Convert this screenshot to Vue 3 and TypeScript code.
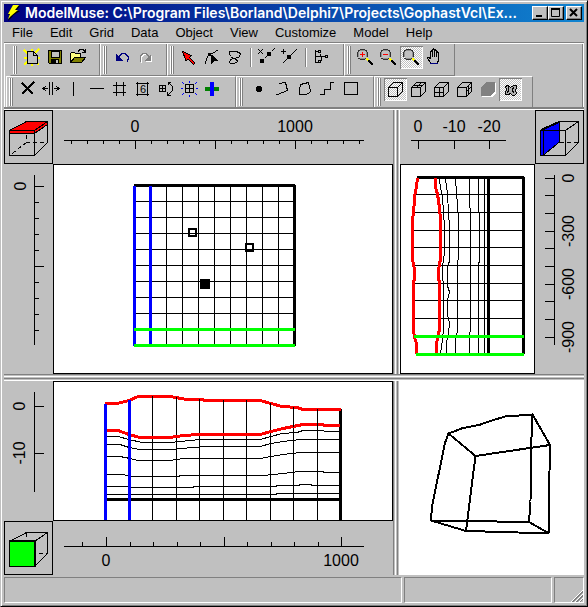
<script setup lang="ts">
interface Shape { d: string; f?: string; s?: string; w?: number }
interface Tool { id: string; label: string; shapes: Shape[]; pressed?: boolean; glyph?: string; gapBefore?: boolean }
interface Tick { at: number; label?: string; major?: boolean }

const title = 'ModelMuse: C:\\Program Files\\Borland\\Delphi7\\Projects\\GophastVcl\\Ex...'
const menus = ['File', 'Edit', 'Grid', 'Data', 'Object', 'View', 'Customize', 'Model', 'Help']

const K = '#000'
const line = (d: string, s = K, w = 1): Shape => ({ d, s, w })
const fill = (d: string, f = K, s?: string): Shape => ({ d, f, s })

const lens = (mark?: string): Shape[] => [
  line('M6 4.5h5M4.5 6v5M12.5 6v5M6 12.5h5', '#909090'),
  line('M6 3.5h5M11 4.5h2M4 4.5h2M3.5 6v5M13.5 6v5M4 12.5h2M11 12.5h2M6 13.5h5M4.5 5v1M12.5 5v1', '#303030'),
  ...(mark ? [line(mark, '#f00')] : []),
  line('M12.5 12.5l3 3', '#ff0', 2),
  line('M14.5 14.5l4.5 4.5', K, 2),
]
const cube = 'M4.5 9.5h9v9h-9zM4.5 9.5l5-5h9l-5 5M18.5 4.5v9l-5 5'

const fileTools: Tool[] = [
  { id: 'new', label: 'New', shapes: [
    line('M4 4l4 4M11.5 2.5v3M19 3l-4 4M4 11.5h4M20 11.5h-4M4 19l4-4M19 19l-4-4M11.5 17v3', '#ff0', 2),
    fill('M7.5 5.5h6l4 4v8h-10z', '#c0c0c0', K), line('M13.5 5.5v4h4'),
  ] },
  { id: 'save', label: 'Save', shapes: [
    fill('M5.5 4.5h13v13h-12l-1-1z', '#808000', K), fill('M8 5h8v6H8z', '#c0c0c0', K), fill('M8 13h8v5H8z', K), fill('M13 14h2v3h-2z', '#c0c0c0'),
  ] },
  { id: 'open', label: 'Open', shapes: [
    fill('M4.5 16.5v-9l1-1h3l1 1h5v4h-6z', '#ffff80', K), fill('M4.5 16.5l4-5h11l-4 5z', '#808000', K), line('M12 5.5l2-2h3l2 2M19.5 3v4M16 6.5h4'),
  ] },
]
const historyTools: Tool[] = [
  { id: 'undo', label: 'Undo', shapes: [fill('M6 8v7h7z', '#000080'), line('M9 10.5l3-3h3l3 3v3l-1 2', '#000080')] },
  { id: 'redo', label: 'Redo', shapes: [
    fill('M19 9v7h-7z', '#fff'), line('M17 11.5l-3-3h-3l-3 3v3l1 2', '#fff'),
    fill('M18 8v7h-7z', '#808080'), line('M16 10.5l-3-3h-3l-3 3v3l1 2', '#808080'),
  ] },
]
const objectTools: Tool[] = [
  { id: 'select', label: 'Select objects', shapes: [fill('M5.5 5.5l9 4-2 2 5.5 5.5-1.5 1.5-5.5-5.5-2 2z', '#f00', K)] },
  { id: 'vertices', label: 'Select vertices', shapes: [
    line('M5.5 18v-3M6.5 15v-3M7.5 12v-2M11 7.5h2M13 6.5h2M15 5.5h1M16 4.5h2'), fill('M8 7h3v3H8z'), fill('M11 9h1l6 6h-4l-3 3z'),
  ] },
  { id: 'lasso', label: 'Lasso', shapes: [line('M8.5 10.5l-2-2v-3h6l4 1 1 2-2 3-5 1-3 1-1 3 1 1h4l3-2-1-2-5-2')] },
  { id: 'delete-segment', label: 'Delete segment', gapBefore: true, shapes: [
    line('M3 3l5 5M8 3l-5 5M4.5 17.5l2-2M9.5 12.5l2-2M16.5 5.5l3-3'), fill('M5 13h4v4H5z'), fill('M12 6h4v4h-4z'),
  ] },
  { id: 'insert-node', label: 'Insert node', shapes: [line('M3 5.5h5M5.5 3v5M4.5 17.5l14-14'), fill('M9 9h4v4H9z')] },
  { id: 'tree', label: 'Objects tree', gapBefore: true, shapes: [
    line('M5.5 4v13M5.5 5.5h3M5.5 10.5h10M5.5 16.5h3M10.5 10.5v-3M11.5 10.5v4'),
    line('M8.5 4.5h2v2h-2zM15.5 9.5h2v2h-2zM8.5 14.5h2v2h-2z'),
  ] },
]
const zoomTools: Tool[] = [
  { id: 'zoom-in', label: 'Zoom in', shapes: lens('M6 8.5h5M8.5 6v5') },
  { id: 'zoom-out', label: 'Zoom out', shapes: lens('M6 8.5h5') },
  { id: 'zoom', label: 'Zoom', pressed: true, shapes: [fill('M6 4h5l2 2v5l-2 2H6l-2-2V6z', '#c0c0c0'), ...lens()] },
  { id: 'pan', label: 'Pan', shapes: [
    line('M7.5 12v-6l1-1 1 1v5M9.5 6v-2l1-1 1 1v7M11.5 5l1-1 1 1v6M13.5 7l1-1 1 1v7l-1 3M7.5 13l-2-2h-1v1l3 5'),
    line('M7 17.5h8', '#000080'),
  ] },
]
const gridTools: Tool[] = [
  { id: 'delete-line', label: 'Delete grid line', shapes: [line('M6 5l11 11M18 4L6 16', K, 2)] },
  { id: 'move-line', label: 'Move grid line', shapes: [line('M10.5 4v13M13.5 4v13M4 10.5h5M7 8l-3 2.5 3 2.5M15 10.5h5M17 8l3 2.5-3 2.5')] },
  { id: 'column', label: 'Add vertical line', shapes: [line('M11.5 4v14')] },
  { id: 'row', label: 'Add horizontal line', shapes: [line('M5 10.5h14')] },
  { id: 'grid', label: 'Draw grid', shapes: [line('M8.5 4v14M15.5 4v14M5 7.5h13M5 14.5h13')] },
  { id: 'spacing', label: 'Grid spacing', glyph: '6', shapes: [line('M6.5 4v14M16.5 4v14M5 5.5h13M5 16.5h13')] },
  { id: 'rotate', label: 'Grid angle', shapes: [
    line('M5.5 7.5h6v6h-6zM8.5 7v7M5 10.5h7'), line('M14 4.5h3M14.5 4v3M15 5l3 3v5l-4 4M13.5 14v3.5h3'),
  ] },
  { id: 'generate', label: 'Generate grid', shapes: [
    line('M5 4l2 2M12.5 3v2M20 4l-2 2M4 10.5h2M19 10.5h2M5 17l2-2M12.5 17v2M20 17l-2-2', '#00f'),
    line('M8.5 6.5h8v8h-8zM12.5 6v9M8 10.5h9'),
  ] },
  { id: 'smooth', label: 'Smooth grid', shapes: [fill('M10 4h4v14h-4z', '#00f'), fill('M5 9h5v4H5zM14 9h5v4h-5z', '#008000')] },
]
const drawTools: Tool[] = [
  { id: 'point', label: 'Point', shapes: [fill('M11 8h4v1h1v4h-1v1h-4v-1h-1V9h1z')] },
  { id: 'polyline', label: 'Polyline', shapes: [line('M10.5 5.5l6-1 2 8-11 4.5')] },
  { id: 'polygon', label: 'Polygon', shapes: [line('M8.5 6.5l8-2 2 9-3 2.5-8 1v-5z')] },
  { id: 'straight', label: 'Straight line', shapes: [line('M5 16.5h4v-5h6v-7h4')] },
  { id: 'rectangle', label: 'Rectangle', shapes: [line('M6.5 4.5h13v12h-13z')] },
]
const viewTools: Tool[] = [
  { id: 'shell', label: 'Grid shell', pressed: true, shapes: [line(cube)] },
  { id: 'top', label: 'Top layer', shapes: [line(cube + 'M9.5 9.5l5-5M7 7.5h9')] },
  { id: 'front', label: 'Front row', shapes: [line(cube + 'M9.5 9v9M4.5 14.5h9')] },
  { id: 'side', label: 'Side column', shapes: [line(cube + 'M15.5 7v9M13.5 13.5l5-5')] },
  { id: 'solid', label: 'Solid view', shapes: [fill('M6 10l5-5h9v10l-4 4H6z', '#fff'), fill('M5 9l5-5h9v10l-5 4H5z', '#808080')] },
  { id: 'objects3d', label: 'Show objects', pressed: true, shapes: [
    fill('M6.5 8.5l2-1 2 1 1 1 3-2h3v2l-1 3 1 3-2 2h-2l-2-2-2 1h-3v-2l1-3z', '#b0b0b0', K), line('M9.5 9v3l-1 3M14.5 9l-1 3 1 3'),
  ] },
]
const toolRows = [
  { id: 'upper', bands: [fileTools, historyTools, objectTools, zoomTools] },
  { id: 'lower', bands: [gridTools, drawTools, viewTools] },
]

const ticks = (values: number[], labels: Record<number, string>, majors: number[] = []): Tick[] =>
  values.map(at => ({ at, label: labels[at], major: at in labels || majors.includes(at) }))

const topX = ticks([71, 87, 103, 119, 135, 151, 167, 183, 199, 215, 231, 247, 263, 279, 295, 311, 327, 343, 359], { 135: '0', 295: '1000' }, [215])
const topY = ticks([186, 202, 218, 234, 250, 266, 282, 298, 314, 330], { 186: '0' }, [266])
const sideX = ticks([418, 454, 489], { 418: '0', 454: '-10', 489: '-20' })
const sideY = ticks([178, 195, 213, 231, 248, 266, 284, 301, 319, 337], { 178: '0', 231: '-300', 284: '-600', 337: '-900' })
const frontY = ticks([406, 453], { 406: '0', 453: '-10' })
const frontX = ticks([82, 106, 130, 153, 177, 200, 224, 247, 271, 294, 318, 341], { 106: '0', 341: '1000' }, [224])

const topColumns = [166, 182, 198, 214, 230, 246, 262, 278]
const topRows = [201, 217, 233, 249, 265, 281, 297, 313]
const sideRows = [[194, 415], [212, 413], [230, 412], [247, 412], [265, 413], [283, 413], [300, 413], [318, 413]]
const frontColumns = [[152, 396], [176, 397], [199, 399], [223, 400], [246, 400], [270, 403], [293, 407], [317, 409]]

const sideSurfaces = [
  '417.5,178 416.5,187 415,194 413.5,212 412.5,220 412.5,260 414.5,269 414.5,278 413.5,283 413.5,331 414.5,337 416.5,344 416.5,354',
  '435.5,178 435.5,187 437.5,194 439.5,208 440.5,220 440.5,259 438.5,270 438.5,278 439.5,283 439.5,329 438,337 436.5,343 436.5,353',
]
const sideLayers = [
  '439.5,179 440.5,188 442.5,197 443.5,212 444.5,228 444.5,253 442.5,267 442.5,278 443.5,283 443.5,328 442.5,340 440.5,353',
  '445.5,179 447.5,194 448.5,212 449.5,227 449.5,261 447.5,267 447.5,286 449.5,292 447.5,300 447.5,315 449.5,323 448.5,333 446.5,343 446.5,353',
  '455.5,179 457.5,205 458.5,220 458.5,253 457.5,267 457.5,330 455.5,341 455.5,353',
  '469.5,179 469.5,200 470.5,215 470.5,331 469.5,333 469.5,353',
  '478.5,179 478.5,208 479.5,218 479.5,260 478.5,265 478.5,353',
  '484.5,179 484.5,353',
]
const frontSurfaces = [
  '105,403.5 117,403.5 129,400.5 138,396.5 170,396.5 187,399.5 200,399.5 207,400.5 260,400.5 271,403.5 282,406.5 297,407.5 303,409.5 341,409.5',
  '107,430.5 118,430.5 129,434.5 140,437.5 170,437.5 183,435.5 200,434.5 260,434.5 271,431.5 283,428.5 303,424.5 323,424.5 324,425.5 340,425.5',
]
const frontLayers = [
  '107,436.5 118,436.5 129,439.5 142,442.5 170,442.5 200,439.5 260,439.5 271,436.5 282,433.5 297,432.5 303,430.5 323,430.5 325,431.5 340,431.5',
  '107,444.5 120,444.5 129,447.5 140,449.5 170,449.5 205,446.5 260,446.5 271,443.5 283,441.5 300,439.5 340,439.5',
  '107,456.5 120,456.5 130,458.5 138,460.5 170,460.5 183,458.5 260,458.5 271,456.5 283,454.5 300,452.5 340,452.5',
  '107,474.5 122,474.5 133,476.5 177,476.5 182,475.5 263,475.5 283,473.5 299,471.5 323,471.5 324,472.5 340,472.5',
  '107,486.5 130,486.5 131,487.5 193,487.5 194,486.5 276,486.5 277,485.5 299,485.5 300,484.5 311,484.5 312,485.5 340,485.5',
  '107,494.5 276,494.5 277,493.5 340,493.5',
]
const model3d = [
  'M448.5 433.5L463 428l16-3 14.5-5 11.5-3.5 27.5-2L550 445l-74.5 11z',
  'M448.5 433.5L445 443l-3.5 17-6.5 31.5-3 15-1 14L529 522l20 11.5',
  'M475.5 456l-2 15.5L466 531M431 520.5L466 531l37 1 46 1.5',
  'M532.5 414.5l-1.5 34-.5 53-1.5 20.5M550 445l-.5 26.5-.5 62',
]
</script>

<template>
  <div class="window">
    <header class="titlebar">
      <svg class="app-icon" width="16" height="16" viewBox="0 0 16 16" aria-hidden="true">
        <path d="M7 1h7l-4 5h4L6 11h1l-5 5 2-6H2z" fill="#000" />
        <path d="M7 0h6L9 5h3l-7 6-3 3 2-5H2z" fill="#ff0" />
      </svg>
      <h1>{{ title }}</h1>
      <div class="controls">
        <button type="button" aria-label="Minimize"><svg width="12" height="10"><path d="M2 8h6" stroke="#000" stroke-width="2" /></svg></button>
        <button type="button" aria-label="Maximize"><svg width="12" height="10"><path d="M1.5 1.5h8v7h-8z" fill="none" stroke="#000" /><path d="M1 1h9" stroke="#000" stroke-width="2" /></svg></button>
        <button type="button" class="close" aria-label="Close"><svg width="12" height="10"><path d="M2 1l7 7M9 1L2 8" stroke="#000" stroke-width="2" /></svg></button>
      </div>
    </header>

    <nav class="menu">
      <button v-for="item in menus" :key="item" type="button">{{ item }}</button>
    </nav>

    <div class="toolbars">
      <div v-for="row in toolRows" :key="row.id" class="tool-row" :class="row.id">
        <div v-for="(band, i) in row.bands" :key="i" class="band" role="toolbar">
          <span class="grip"></span>
          <template v-for="tool in band" :key="tool.id">
            <span v-if="tool.gapBefore" class="divider"></span>
            <button type="button" class="tool" :class="{ pressed: tool.pressed }" :aria-label="tool.label">
              <svg width="23" height="23" viewBox="0 0 23 23" shape-rendering="crispEdges">
                <path v-for="(p, n) in tool.shapes" :key="n" :d="p.d" :fill="p.f ?? 'none'" :stroke="p.s ?? 'none'" :stroke-width="p.w ?? 1" />
                <text v-if="tool.glyph" x="12" y="15" class="glyph">{{ tool.glyph }}</text>
              </svg>
            </button>
          </template>
        </div>
      </div>
    </div>

    <main class="views">
      <section class="quad top-view" aria-label="Top view">
        <div class="corner">
          <svg viewBox="0 0 47 52" shape-rendering="crispEdges">
            <path d="M4.5 19.5l17-9h21v3l-13 9h-25z" fill="#f00" />
            <path class="thin" d="M4.5 19.5h25v25h-25zM4.5 19.5l17-9h21l-13 9M42.5 10.5v21l-13 13M4.5 22.5h25l13-9" />
            <path class="thin dash" d="M21.5 24v7.5h21M21.5 31.5l-17 13" />
          </svg>
        </div>
        <svg class="ruler" viewBox="53 110 340 54">
          <path class="thin" d="M64 140.5h300" />
          <path v-for="t in topX" :key="t.at" class="thin" :d="`M${t.at + 0.5} 140v${t.major ? 9 : 4}`" />
          <template v-for="t in topX" :key="t.at"><text v-if="t.label" :x="t.at" y="132">{{ t.label }}</text></template>
        </svg>
        <svg class="ruler" viewBox="4 164 49 210">
          <path class="thin" d="M34.5 175v170" />
          <path v-for="t in topY" :key="t.at" class="thin" :d="`M34 ${t.at + 0.5}h${t.major ? 10 : 5}`" />
          <template v-for="t in topY" :key="t.at"><text v-if="t.label" :transform="`translate(26 ${t.at}) rotate(-90)`">{{ t.label }}</text></template>
        </svg>
        <div class="canvas">
          <svg viewBox="54 165 338 208" shape-rendering="crispEdges">
            <path v-for="x in topColumns" :key="x" class="thin" :d="`M${x + 0.5} 185v160`" />
            <path v-for="y in topRows" :key="y" class="thin" :d="`M134 ${y + 0.5}h160`" />
            <path class="thick" d="M134 185.5h161M294.5 185v161" />
            <path class="thick blue" d="M134.5 186v160M150.5 186v160" />
            <path class="thick green" d="M134 329.5h161M134 345.5h161" />
            <path d="M189 229h7v7h-7zM246 244h7v7h-7z" fill="none" stroke="#000" stroke-width="2" />
            <path d="M200 279h10v10h-10z" />
          </svg>
        </div>
      </section>

      <div class="splitter vertical"></div>

      <section class="quad side-view" aria-label="Side view">
        <svg class="ruler" viewBox="400 110 135 54">
          <path class="thin" d="M411 140.5h95" />
          <path v-for="t in sideX" :key="t.at" class="thin" :d="`M${t.at + 0.5} 140v9`" />
          <text v-for="t in sideX" :key="t.at" :x="t.at" y="132">{{ t.label }}</text>
        </svg>
        <div class="corner">
          <svg viewBox="0 0 47 52" shape-rendering="crispEdges">
            <path d="M4.5 19.5l19-9v21l-16 13h-3z" fill="#00f" />
            <path class="thin" d="M4.5 19.5h25v25h-25zM4.5 19.5l19-9h19l-13 9M42.5 10.5v21l-13 13M7.5 19v25l16-13v-21" />
            <path d="M5 19l18-8" stroke="#000" stroke-width="2" />
            <path class="thin dash" d="M23.5 31.5h19" />
          </svg>
        </div>
        <div class="canvas">
          <svg viewBox="401 165 133 208" shape-rendering="crispEdges">
            <path v-for="r in sideRows" :key="r[0]" class="thin" :d="`M${r[1]} ${r[0] + 0.5}H523`" />
            <polyline v-for="p in sideLayers" :key="p" class="thin" :points="p" />
            <path class="thick" d="M417 177.5h107M523.5 177v177M488.5 177v176" />
            <polyline v-for="p in sideSurfaces" :key="p" class="thick red" :points="p" />
            <path class="thick green" d="M414 336.5h110M416 354.5h108" />
          </svg>
        </div>
        <svg class="ruler" viewBox="535 164 49 210">
          <path class="thin" d="M554.5 175v170" />
          <path v-for="t in sideY" :key="t.at" class="thin" :d="`M545 ${t.at + 0.5}h9`" />
          <template v-for="t in sideY" :key="t.at"><text v-if="t.label" :transform="`translate(574 ${t.at}) rotate(-90)`">{{ t.label }}</text></template>
        </svg>
      </section>

      <div class="splitter horizontal"></div>

      <section class="quad front-view" aria-label="Front view">
        <svg class="ruler" viewBox="4 381 49 140">
          <path class="thin" d="M34.5 392v100" />
          <path v-for="t in frontY" :key="t.at" class="thin" :d="`M34 ${t.at + 0.5}h10`" />
          <text v-for="t in frontY" :key="t.at" :transform="`translate(25 ${t.at}) rotate(-90)`">{{ t.label }}</text>
        </svg>
        <div class="canvas">
          <svg viewBox="54 382 338 138" shape-rendering="crispEdges">
            <path v-for="c in frontColumns" :key="c[0]" class="thin" :d="`M${c[0] + 0.5} ${c[1]}V520`" />
            <polyline v-for="p in frontLayers" :key="p" class="thin" :points="p" />
            <path class="thick" d="M107 499.5h233M340.5 409v111" />
            <polyline v-for="p in frontSurfaces" :key="p" class="thick red" :points="p" />
            <path class="thick blue" d="M105.5 404v116M129.5 400v120" />
            <path v-for="c in frontColumns" :key="c[0]" class="thin" :d="`M${c[0] + 0.5} ${c[1]}v20`" />
          </svg>
        </div>
        <div class="corner">
          <svg viewBox="0 0 47 52" shape-rendering="crispEdges">
            <path d="M4.5 19.5h25v25h-25z" fill="#0f0" />
            <path class="thin" d="M4.5 19.5h25v25h-25zM4.5 19.5l17-9h21l-13 9M42.5 10.5v21l-13 13" />
            <path d="M4 19h26v26" fill="none" stroke="#000" stroke-width="2" />
            <path class="thin dash" d="M21.5 11v8M34 31.5h8" />
          </svg>
        </div>
        <svg class="ruler" viewBox="53 521 340 54">
          <path class="thin" d="M64 546.5h300" />
          <path v-for="t in frontX" :key="t.at" class="thin" :d="`M${t.at + 0.5} 546v${t.major ? -9 : -4}`" />
          <template v-for="t in frontX" :key="t.at"><text v-if="t.label" :x="t.at" y="566">{{ t.label }}</text></template>
        </svg>
      </section>

      <div class="splitter vertical"></div>

      <section class="perspective" aria-label="3D view">
        <svg viewBox="400 381 184 194" shape-rendering="crispEdges">
          <path v-for="d in model3d" :key="d" :d="d" fill="none" stroke="#000" stroke-width="2" />
        </svg>
      </section>
    </main>

    <footer class="status">
      <span class="cell wide"></span>
      <span class="cell medium"></span>
      <span class="cell narrow">
        <svg width="12" height="12" viewBox="0 0 12 12" aria-hidden="true">
          <path d="M0 12L12 0M4 12l8-8M8 12l4-4" stroke="#fff" />
          <path d="M1 12L12 1M2 12L12 2M5 12l7-7M6 12l6-6M9 12l3-3" stroke="#808080" />
        </svg>
      </span>
    </footer>
  </div>
</template>

<style>
body {
  margin: 0;
}
</style>

<style scoped>
.window {
  box-sizing: border-box;
  display: flex;
  flex-direction: column;
  height: 100vh;
  padding: 3px;
  overflow: hidden;
  border: 1px solid;
  border-color: #c0c0c0 #000 #000 #c0c0c0;
  box-shadow: inset 1px 1px #fff, inset -1px -1px #808080;
  background: #c0c0c0;
  color: #000;
  font-family: "Liberation Sans", Arial, sans-serif;
  font-size: 13px;
}
button {
  margin: 0;
  padding: 0;
  border: 0;
  background: none;
  color: inherit;
  font: inherit;
}
svg {
  display: block;
}
.titlebar {
  display: flex;
  flex: none;
  align-items: center;
  height: 18px;
  padding: 0 2px;
  gap: 3px;
  background: linear-gradient(90deg, #000080, #1084d0);
}
.app-icon {
  flex: none;
}
h1 {
  flex: 1;
  min-width: 0;
  margin: 0;
  overflow: hidden;
  color: #fff;
  font-family: Inter, "Liberation Sans", sans-serif;
  font-size: 14px;
  font-weight: 600;
  line-height: 18px;
  white-space: nowrap;
}
.controls {
  display: flex;
  flex: none;
}
.controls button {
  box-sizing: border-box;
  width: 16px;
  height: 14px;
  padding: 1px;
  border: 1px solid;
  border-color: #fff #000 #000 #fff;
  background: #c0c0c0;
  box-shadow: inset -1px -1px #808080;
}
.controls .close {
  margin-left: 2px;
}
.menu {
  display: flex;
  flex: none;
  align-items: center;
  height: 20px;
  padding-left: 8px;
  gap: 17px;
}
.toolbars {
  flex: none;
  margin-bottom: 1px;
  padding-top: 1px;
  border-top: 1px solid #808080;
  border-bottom: 2px solid #808080;
  box-shadow: inset 1px 1px #fff, inset -1px 0 #fff, inset -2px 0 #808080, 0 1px #fff;
}
.tool-row {
  display: flex;
  box-sizing: border-box;
}
.upper {
  height: 32px;
  padding-left: 6px;
}
.lower {
  height: 31px;
  padding-left: 2px;
}
.band {
  display: flex;
  box-sizing: border-box;
  padding: 2px 10px 0 2px;
  border-left: 1px solid #fff;
  border-right: 1px solid #808080;
}
.upper .band {
  border-bottom: 1px solid #808080;
}
.upper .band:first-child {
  border-left-color: transparent;
}
.upper .band:last-child {
  padding-right: 8px;
}
.lower .band {
  padding: 1px 12px 0 2px;
  border-top: 1px solid #fff;
}
.lower .band:last-child {
  padding-right: 10px;
}
.grip {
  width: 4px;
  height: 28px;
  margin-right: 3px;
  background: linear-gradient(90deg, #fff 0 1px, #808080 1px 2px, #fff 2px 3px, #808080 3px);
}
.divider {
  width: 1px;
  height: 19px;
  margin: 2px 3px 0 4px;
  border-right: 1px solid #fff;
  background: #808080;
}
.tool {
  width: 23px;
  height: 23px;
}
.pressed {
  background: repeating-conic-gradient(#fff 0 25%, #c0c0c0 0 50%) 0 0 / 2px 2px;
  box-shadow: inset 1px 1px #808080, inset -1px -1px #fff;
}
.glyph {
  font-size: 11px;
  text-anchor: middle;
}
.views {
  display: grid;
  flex: 1;
  grid-template-columns: minmax(0, 389fr) 7px minmax(0, 184fr);
  grid-template-rows: minmax(0, 264fr) 7px minmax(0, 194fr);
  min-height: 0;
}
.splitter.vertical {
  background: linear-gradient(90deg, #808080 0 1px, #c0c0c0 1px 2px, #fff 2px 3px, #c0c0c0 3px 4px, #808080 4px 5px, #c0c0c0 5px 6px, #fff 6px);
}
.splitter.horizontal {
  grid-column: 1 / -1;
  background: linear-gradient(#808080 0 1px, #c0c0c0 1px 2px, #fff 2px 3px, #c0c0c0 3px 4px, #808080 4px 5px, #c0c0c0 5px 6px, #fff 6px);
}
.quad {
  display: grid;
  min-height: 0;
}
.top-view {
  grid-template: 54px minmax(0, 1fr) / 49px minmax(0, 1fr);
}
.side-view {
  grid-template: 54px minmax(0, 1fr) / minmax(0, 1fr) 49px;
}
.front-view {
  grid-template: minmax(0, 1fr) 54px / 49px minmax(0, 1fr);
}
.corner,
.canvas {
  box-sizing: border-box;
  min-width: 0;
  min-height: 0;
  border: 1px solid #000;
}
.canvas {
  background: #fff;
}
.canvas svg,
.corner svg,
.ruler,
.perspective svg {
  width: 100%;
  height: 100%;
}
.ruler text {
  font-size: 16px;
  text-anchor: middle;
}
.ruler path {
  shape-rendering: crispEdges;
}
.thin {
  fill: none;
  stroke: #000;
}
.dash {
  stroke-dasharray: 4 3;
}
.thick {
  fill: none;
  stroke: #000;
  stroke-width: 3;
}
.blue {
  stroke: #00f;
}
.green {
  stroke: #0f0;
}
.red {
  stroke: #f00;
}
.perspective {
  min-height: 0;
  background: #fff;
}
.status {
  display: flex;
  flex: none;
  height: 26px;
  padding-top: 2px;
  gap: 2px;
}
.cell {
  box-sizing: border-box;
  border: 1px solid;
  border-color: #808080 #fff #fff #808080;
}
.wide {
  flex: 400;
}
.medium {
  flex: 148;
}
.narrow {
  display: flex;
  flex: 28;
  align-items: flex-end;
  justify-content: flex-end;
}
</style>
